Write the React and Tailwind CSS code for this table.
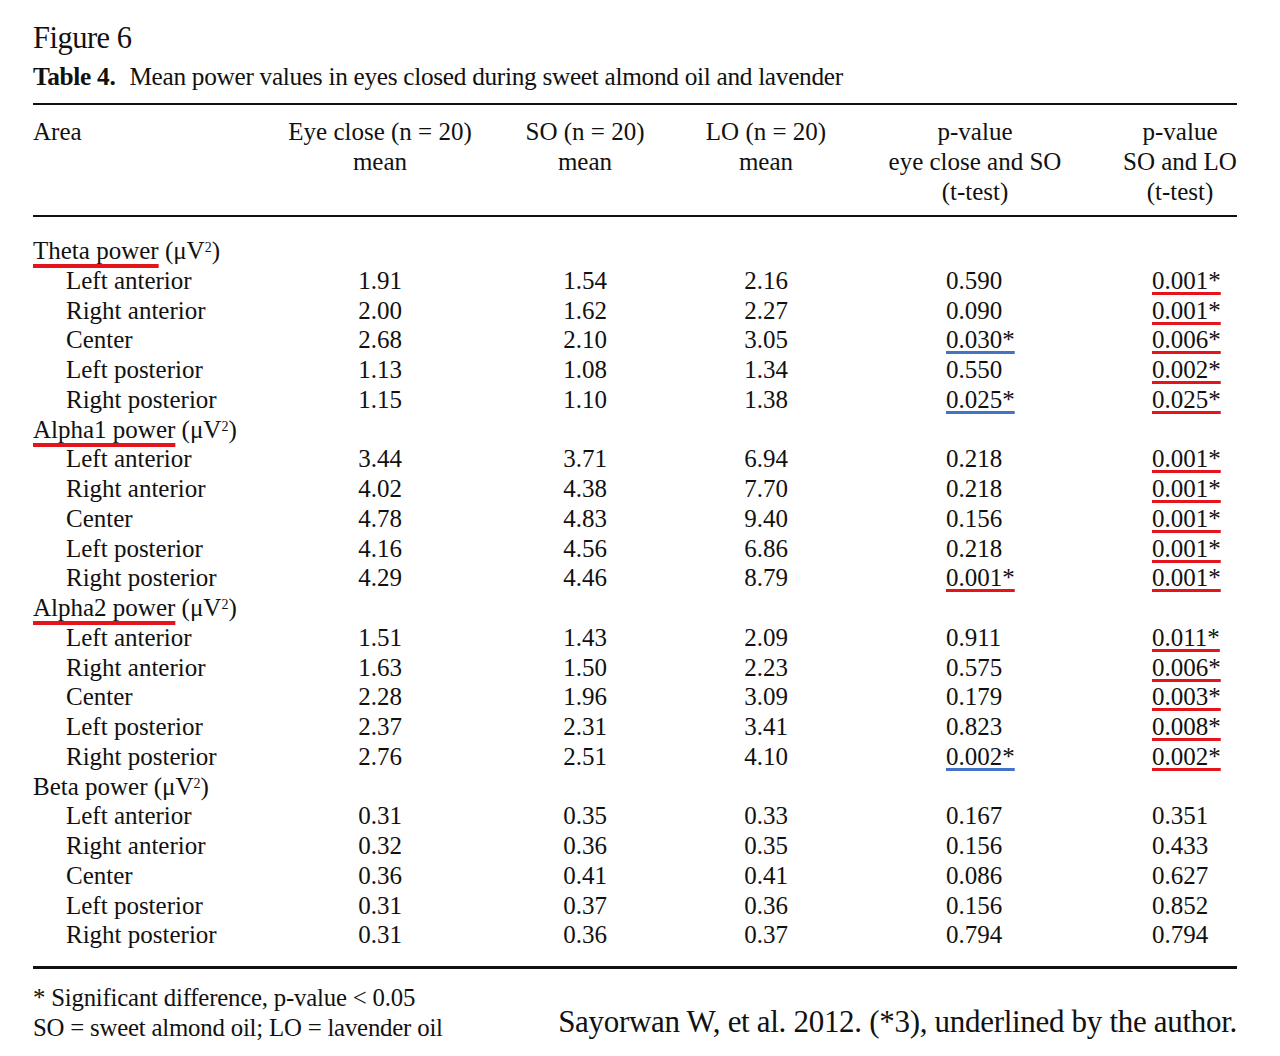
const groups = [
  {
    name: "Theta power",
    mark: true,
    rows: [
      ["Left anterior", "1.91", "1.54", "2.16", ["0.590"], ["0.001*", "r"]],
      ["Right anterior", "2.00", "1.62", "2.27", ["0.090"], ["0.001*", "r"]],
      ["Center", "2.68", "2.10", "3.05", ["0.030*", "b"], ["0.006*", "r"]],
      ["Left posterior", "1.13", "1.08", "1.34", ["0.550"], ["0.002*", "r"]],
      ["Right posterior", "1.15", "1.10", "1.38", ["0.025*", "b"], ["0.025*", "r"]],
    ],
  },
  {
    name: "Alpha1 power",
    mark: true,
    rows: [
      ["Left anterior", "3.44", "3.71", "6.94", ["0.218"], ["0.001*", "r"]],
      ["Right anterior", "4.02", "4.38", "7.70", ["0.218"], ["0.001*", "r"]],
      ["Center", "4.78", "4.83", "9.40", ["0.156"], ["0.001*", "r"]],
      ["Left posterior", "4.16", "4.56", "6.86", ["0.218"], ["0.001*", "r"]],
      ["Right posterior", "4.29", "4.46", "8.79", ["0.001*", "r"], ["0.001*", "r"]],
    ],
  },
  {
    name: "Alpha2 power",
    mark: true,
    rows: [
      ["Left anterior", "1.51", "1.43", "2.09", ["0.911"], ["0.011*", "r"]],
      ["Right anterior", "1.63", "1.50", "2.23", ["0.575"], ["0.006*", "r"]],
      ["Center", "2.28", "1.96", "3.09", ["0.179"], ["0.003*", "r"]],
      ["Left posterior", "2.37", "2.31", "3.41", ["0.823"], ["0.008*", "r"]],
      ["Right posterior", "2.76", "2.51", "4.10", ["0.002*", "b"], ["0.002*", "r"]],
    ],
  },
  {
    name: "Beta power",
    mark: false,
    rows: [
      ["Left anterior", "0.31", "0.35", "0.33", ["0.167"], ["0.351"]],
      ["Right anterior", "0.32", "0.36", "0.35", ["0.156"], ["0.433"]],
      ["Center", "0.36", "0.41", "0.41", ["0.086"], ["0.627"]],
      ["Left posterior", "0.31", "0.37", "0.36", ["0.156"], ["0.852"]],
      ["Right posterior", "0.31", "0.36", "0.37", ["0.794"], ["0.794"]],
    ],
  },
];

const cols = "grid grid-cols-[262px_170px_240px_122px_296px_114px]";

const PValue = ({ v }) => {
  const [text, color] = v;
  if (color === "r")
    return (
      <span className="underline decoration-[#e3141b] decoration-[3px] underline-offset-[3px] [text-decoration-skip-ink:none]">
        {text}
      </span>
    );
  if (color === "b")
    return (
      <span className="underline decoration-[#4472c4] decoration-[3px] underline-offset-[3px] [text-decoration-skip-ink:none]">
        {text}
      </span>
    );
  return <span>{text}</span>;
};

const Center = ({ children }) => (
  <div className="flex flex-col items-center whitespace-nowrap">{children}</div>
);

export default function App() {
  return (
    <div className="w-[1280px] h-[1056px] bg-white text-[#111] font-['Liberation_Serif','Times_New_Roman',serif] overflow-hidden">
      <div className="pl-[33px] pr-[43px]">
        <h1 className="pt-[20px] text-[30.5px] leading-[36px] tracking-[-0.5px]">Figure 6</h1>
        <p className="text-[25.3px] leading-[30px] mt-[5px] tracking-[-0.3px] whitespace-nowrap">
          <span className="font-bold">Table 4.</span>
          <span className="ml-[14px]">Mean power values in eyes closed during sweet almond oil and lavender</span>
        </p>

        <div className="mt-[12px] border-t-2 border-[#111] text-[25px] leading-[29.75px]">
          <div className={`${cols} pt-[12px] pb-[8px] leading-[30px]`}>
            <div>Area</div>
            <Center>
              <span>Eye close (n = 20)</span>
              <span>mean</span>
            </Center>
            <Center>
              <span>SO (n = 20)</span>
              <span>mean</span>
            </Center>
            <Center>
              <span>LO (n = 20)</span>
              <span>mean</span>
            </Center>
            <Center>
              <span>p-value</span>
              <span>eye close and SO</span>
              <span>(t-test)</span>
            </Center>
            <Center>
              <span>p-value</span>
              <span>SO and LO</span>
              <span>(t-test)</span>
            </Center>
          </div>

          <div className="border-t-2 border-[#111] pt-[19px] pb-[16px]">
            {groups.map((g) => (
              <div key={g.name}>
                <div className="whitespace-nowrap">
                  <span
                    className={
                      g.mark
                        ? "underline decoration-[#e3141b] decoration-[4px] underline-offset-[5px] [text-decoration-skip-ink:none]"
                        : ""
                    }
                  >
                    {g.name}
                  </span>{" "}
                  (μV<sup className="text-[14px]">2</sup>)
                </div>
                {g.rows.map((r) => (
                  <div key={r[0]} className={cols}>
                    <div className="pl-[33px] whitespace-nowrap">{r[0]}</div>
                    <div className="text-center">{r[1]}</div>
                    <div className="text-center">{r[2]}</div>
                    <div className="text-center">{r[3]}</div>
                    <div className="pl-[119px] whitespace-nowrap">
                      <PValue v={r[4]} />
                    </div>
                    <div className="pl-[29px] whitespace-nowrap">
                      <PValue v={r[5]} />
                    </div>
                  </div>
                ))}
              </div>
            ))}
          </div>
        </div>

        <div className="border-t-[3px] border-[#111] pt-[14px] flex items-start justify-between">
          <div className="text-[24.8px] leading-[30px] tracking-[-0.2px] whitespace-nowrap">
            <p>* Significant difference, p-value &lt; 0.05</p>
            <p>SO = sweet almond oil; LO = lavender oil</p>
          </div>
          <p className="mt-[22px] text-[31px] leading-[34px] tracking-[-0.3px] whitespace-nowrap">
            Sayorwan W, et al. 2012. (*3), underlined by the author.
          </p>
        </div>
      </div>
    </div>
  );
}
